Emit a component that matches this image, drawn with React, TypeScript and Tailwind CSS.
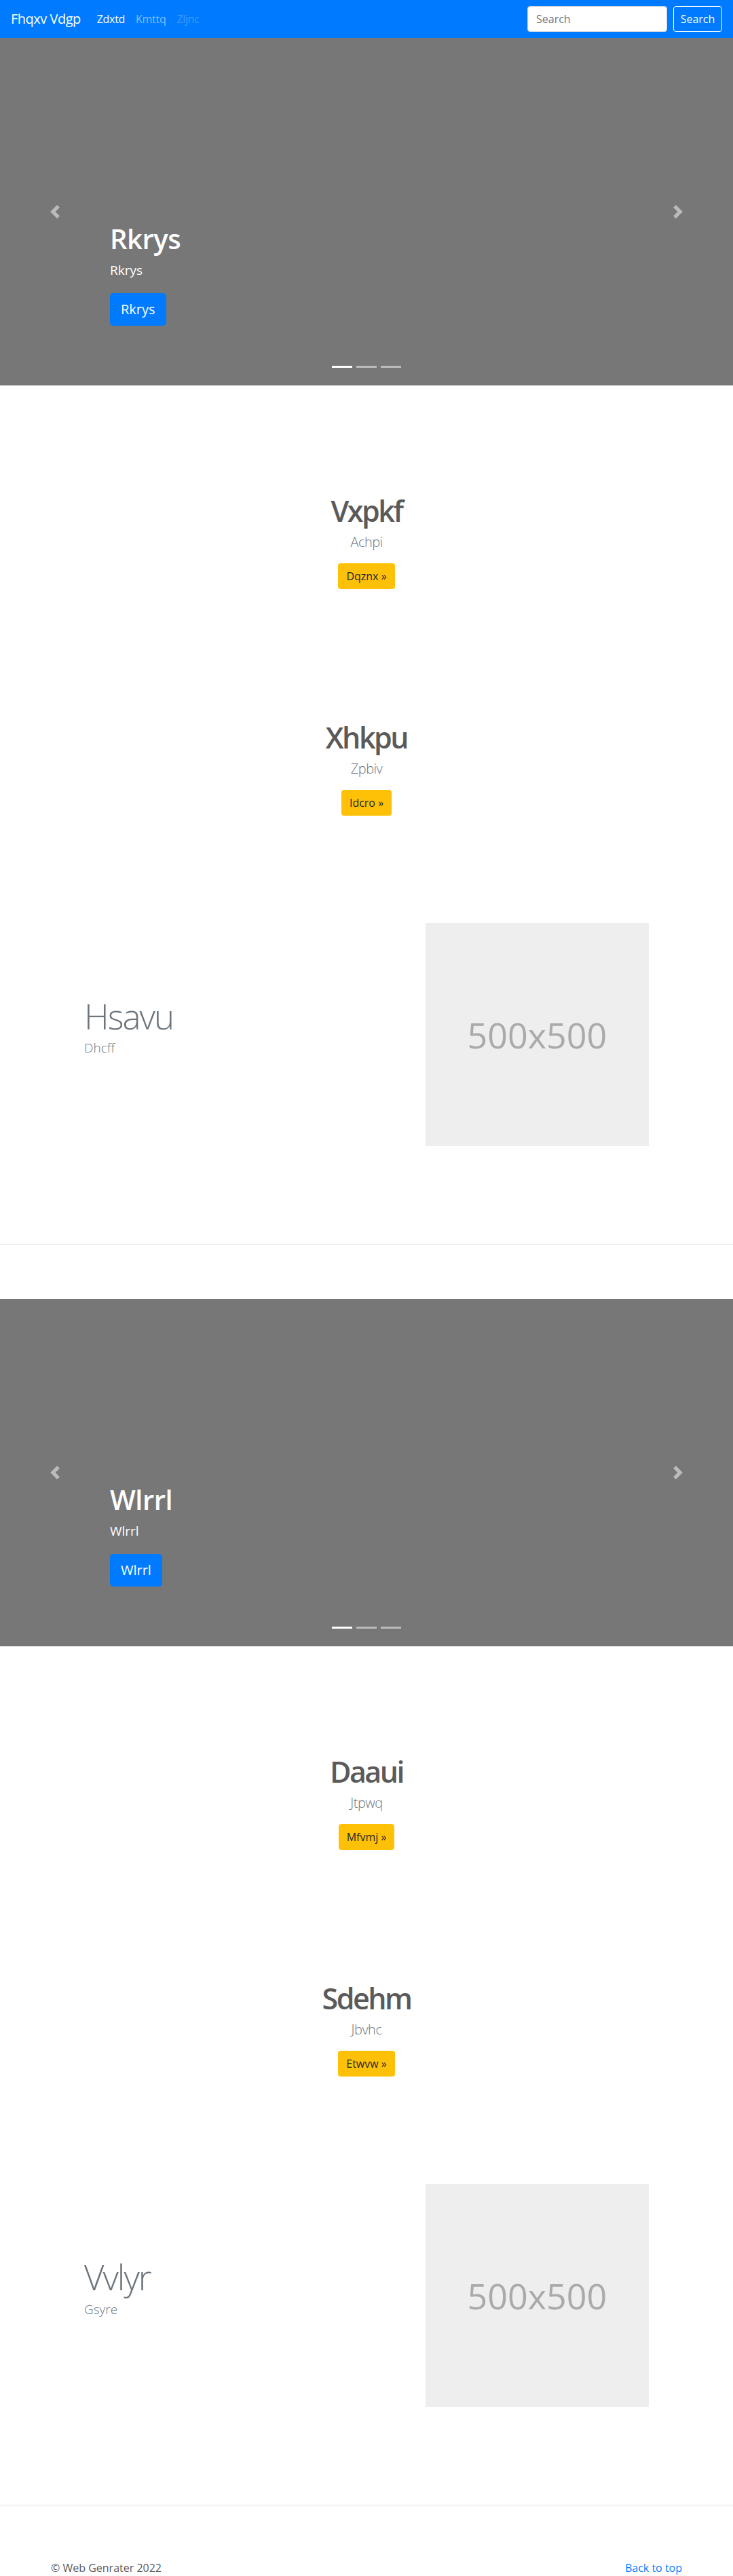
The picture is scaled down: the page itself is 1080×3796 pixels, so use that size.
import React from 'react';

const font = { fontFamily: '"Open Sans", "Noto Sans", Arial, sans-serif' };

interface Teaser {
  title: string;
  sub: string;
  cta: string;
}

interface Block {
  slide: string;
  teasers: Teaser[];
  feature: { title: string; sub: string };
}

const blocks: Block[] = [
  {
    slide: 'Rkrys',
    teasers: [
      { title: 'Vxpkf', sub: 'Achpi', cta: 'Dqznx »' },
      { title: 'Xhkpu', sub: 'Zpbiv', cta: 'Idcro »' },
    ],
    feature: { title: 'Hsavu', sub: 'Dhcff' },
  },
  {
    slide: 'Wlrrl',
    teasers: [
      { title: 'Daaui', sub: 'Jtpwq', cta: 'Mfvmj »' },
      { title: 'Sdehm', sub: 'Jbvhc', cta: 'Etwvw »' },
    ],
    feature: { title: 'Vvlyr', sub: 'Gsyre' },
  },
];

const NavBar = () => (
  <nav className="h-14 bg-[#007bff] flex items-center px-4">
    <span className="text-[20px] leading-[30px] tracking-[-0.5px] text-white mr-4">Fhqxv Vdgp</span>
    <div className="flex text-[16px] leading-6 tracking-[-0.3px]">
      <span className="px-2 text-white">Zdxtd</span>
      <span className="px-2 text-[#80bdff]">Kmttq</span>
      <span className="px-2 text-[#409cff]">Zljnc</span>
    </div>
    <div className="ml-auto flex items-center">
      <div className="w-[206px] h-[38px] bg-white border border-[#ced4da] rounded-[4px] px-3 flex items-center text-[16px] text-[#6c757d]">
        Search
      </div>
      <button className="ml-[9px] w-[72px] h-[38px] border border-white rounded-[4px] text-white text-[16px]">
        Search
      </button>
    </div>
  </nav>
);

const Chevron = ({ dir }: { dir: 'left' | 'right' }) => (
  <svg viewBox="0 0 8 8" className="w-5 h-5 opacity-50" fill="#fff">
    {dir === 'left' ? (
      <path d="M5.25 0l-4 4 4 4 1.5-1.5-2.5-2.5 2.5-2.5-1.5-1.5z" />
    ) : (
      <path d="M2.75 0l-1.5 1.5 2.5 2.5-2.5 2.5 1.5 1.5 4-4-4-4z" />
    )}
  </svg>
);

const Carousel = ({ title }: { title: string }) => (
  <div className="relative h-[512px] bg-[#777]">
    <div className="absolute left-0 top-0 bottom-0 w-[15%] flex items-center justify-center">
      <Chevron dir="left" />
    </div>
    <div className="absolute right-0 top-0 bottom-0 w-[15%] flex items-center justify-center">
      <Chevron dir="right" />
    </div>
    <div className="absolute left-[15%] bottom-[88px] text-white">
      <h1 className="text-[40px] font-semibold leading-[1.2] tracking-[-0.5px] mb-2">{title}</h1>
      <p className="text-[19px] leading-[1.5] mb-5">{title}</p>
      <button className="h-12 px-4 bg-[#007bff] rounded-[5px] text-[20px] text-white">{title}</button>
    </div>
    <div className="absolute bottom-[26px] left-0 right-0 flex justify-center gap-[6px]">
      <span className="w-[30px] h-[3px] bg-white" />
      <span className="w-[30px] h-[3px] bg-[#bbb]" />
      <span className="w-[30px] h-[3px] bg-[#bbb]" />
    </div>
  </div>
);

const TeaserBlock = ({ t }: { t: Teaser }) => (
  <div className="flex flex-col items-center text-center">
    <h2 className="text-[43px] font-semibold leading-[54px] tracking-[-2.5px] mb-1 text-[#5a5a5a]">{t.title}</h2>
    <p className="text-[20px] font-light leading-[1.5] tracking-[-0.5px] mb-4 text-[#6c757d]">{t.sub}</p>
    <button className="h-[38px] px-3 bg-[#ffc107] rounded-[4px] text-[16px] text-[#212529]">{t.cta}</button>
  </div>
);

const Featurette = ({ title, sub }: { title: string; sub: string }) => (
  <div className="w-[862px] mx-auto flex items-center">
    <div className="w-7/12 px-[15px]">
      <h2 className="text-[51px] font-light leading-[1.3] tracking-[-2px] text-[#6c757d]">{title}</h2>
      <p className="text-[19px] font-light leading-[1.5] mb-[26px] text-[#6c757d]">{sub}</p>
    </div>
    <div className="w-5/12 px-[15px]">
      <div className="aspect-square bg-[#eee] flex items-center justify-center text-[52px] text-[#aaa]">
        500x500
      </div>
    </div>
  </div>
);

export default function App() {
  return (
    <div className="bg-white text-[#5a5a5a]" style={font}>
      <NavBar />
      {blocks.map((b, i) => (
        <div key={i} className={i > 0 ? 'mt-20' : ''}>
          <Carousel title={b.slide} />
          <div className="pt-[158px]">
            <TeaserBlock t={b.teasers[0]} />
            <div className="mt-[192px]">
              <TeaserBlock t={b.teasers[1]} />
            </div>
          </div>
          <div className="mt-[158px]">
            <Featurette title={b.feature.title} sub={b.feature.sub} />
          </div>
          <div className="mt-[144px] h-px bg-[#e5e5e5]" />
        </div>
      ))}
      <footer className="pt-20">
        <div className="w-[960px] mx-auto px-[15px] flex justify-between text-[16px] leading-6">
          <span>© Web Genrater 2022</span>
          <span className="text-[#007bff]">Back to top</span>
        </div>
      </footer>
    </div>
  );
}
